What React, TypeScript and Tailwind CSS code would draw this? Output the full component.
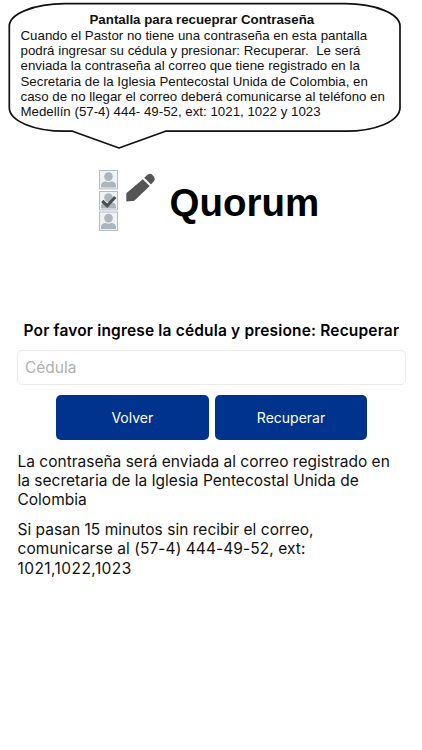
const bubbleLines = [
  'Cuando el Pastor no tiene una contraseña en esta pantalla',
  'podrá ingresar su cédula y presionar: Recuperar.\u00a0 Le será',
  'enviada la contraseña al correo que tiene registrado en la',
  'Secretaria de la Iglesia Pentecostal Unida de Colombia, en',
  'caso de no llegar el correo deberá comunicarse al teléfono en',
  'Medellín (57-4) 444- 49-52, ext: 1021, 1022 y 1023',
];

function HelpBubble() {
  return (
    <section className="relative h-[155px] pl-[20.5px] pt-[12.4px] font-['Liberation_Sans',Arial,sans-serif] text-[13.3px] leading-[15.3px] text-[#111]">
      <svg className="absolute left-0 top-0" width="422" height="155" viewBox="0 0 422 155" fill="none" aria-hidden="true">
        <path
          d="M65 3.7H345C376 3.7 400 14 400 26V107.5C400 121 376 131.2 345 131.2H165.5L119 148L72.5 131.2H65C34 131.2 9.3 121 9.3 107.5V26C9.3 14 34 3.7 65 3.7Z"
          stroke="#111"
          strokeWidth="1.7"
          strokeLinejoin="round"
        />
      </svg>
      <h2 className="relative whitespace-nowrap pl-[69px] font-bold">Pantalla para recueprar Contraseña</h2>
      {bubbleLines.map((line) => (
        <p key={line} className="relative whitespace-nowrap">
          {line}
        </p>
      ))}
    </section>
  );
}

function Portrait({ y }: { y: number }) {
  return (
    <g transform={`translate(9 ${y})`}>
      <rect x="0.5" y="0.5" width="18" height="18.4" fill="#f0f3f6" stroke="#b3bcc4" />
      <circle cx="9.5" cy="6.6" r="4.3" fill="#a9b5bf" />
      <path d="M2 17.5V15.2C2 12.6 4.6 11.6 6.8 11.2Q9.5 13.2 12.2 11.2C14.4 11.6 17 12.6 17 15.2V17.5Z" fill="#a9b5bf" />
    </g>
  );
}

function Brand() {
  return (
    <section className="flex h-[165px] items-start pl-[90px] pt-[5px]">
      <svg width="75" height="80" viewBox="0 0 75 80" aria-hidden="true">
        <Portrait y={10} />
        <Portrait y={31} />
        <Portrait y={51.5} />
        <path d="M12.3 41L17.2 45.8L25.3 37" fill="none" stroke="#505050" strokeWidth="3.2" />
        <path d="M36.3 41.5V33.2L52.8 19.2L59.7 26L44.3 40.7Z" fill="#555" />
        <path d="M54.2 17.8L57.8 14.6Q60 12.7 62 14.6L64 16.8Q65.6 18.8 64 20.9L61 24.4Z" fill="#555" />
      </svg>
      <h1 className="ml-[4.5px] mt-[21px] font-['Liberation_Sans',Arial,sans-serif] text-[38.5px] font-bold leading-[44px] text-black">Quorum</h1>
    </section>
  );
}

export default function App() {
  return (
    <main className="h-[750px] w-[422px] overflow-hidden bg-white font-['Inter',sans-serif] text-black">
      <HelpBubble />
      <Brand />
      <form onSubmit={(e) => e.preventDefault()}>
        <label htmlFor="cedula" className="block h-[30px] whitespace-nowrap pl-[23.5px] text-[15.5px] font-semibold leading-[22px] tracking-[0.165px]">
          Por favor ingrese la cédula y presione: Recuperar
        </label>
        <input
          id="cedula"
          placeholder="Cédula"
          className="ml-[17px] block h-[35px] w-[389px] rounded-[5px] border border-[#ececec] bg-white px-[7px] text-[15.5px] outline-none placeholder:text-[#b0b0b0]"
        />
        <div className="ml-[56px] mt-[10px] flex gap-[6px] text-[14px] text-white">
          <button type="button" className="h-[45px] w-[152.7px] rounded-[5px] bg-[#00338d]">Volver</button>
          <button type="submit" className="h-[45px] w-[152.7px] rounded-[5px] bg-[#00338d]">Recuperar</button>
        </div>
      </form>
      <section className="mt-[11.5px] flex flex-col gap-[11px] whitespace-nowrap pl-[17.5px] text-[15.5px] leading-[19.2px] text-[#111]">
        <p>
          La contraseña será enviada al correo registrado en
          <br />
          la secretaria de la Iglesia Pentecostal Unida de
          <br />
          Colombia
        </p>
        <p>
          <span className="tracking-[0.02px]">Si pasan 15 minutos sin recibir el correo,</span>
          <br />
          <span className="tracking-[0.07px]">comunicarse al (57-4) 444-49-52, ext:</span>
          <br />
          <span className="tracking-[0.43px]">1021,1022,1023</span>
        </p>
      </section>
    </main>
  );
}
